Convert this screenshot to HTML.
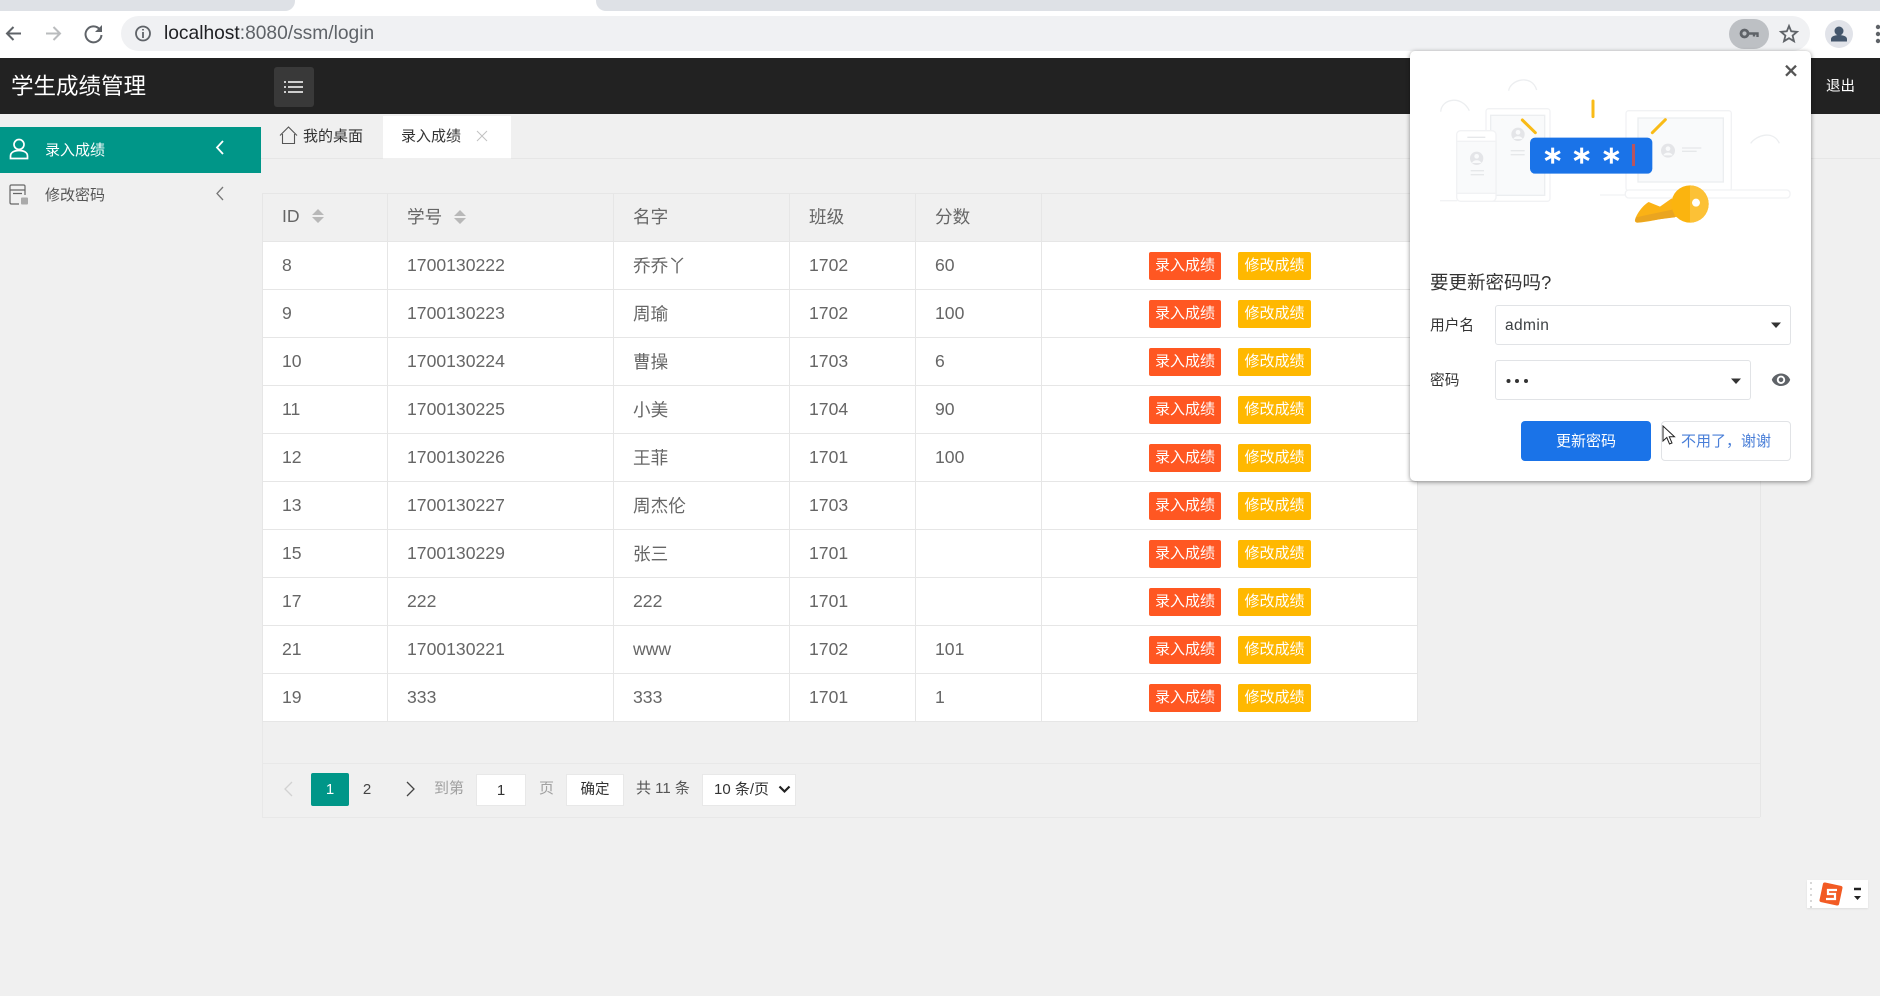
<!DOCTYPE html>
<html lang="zh"><head><meta charset="utf-8"><title>学生成绩管理</title>
<style>
*{box-sizing:border-box}
html,body{margin:0;padding:0}
body{width:1880px;height:996px;overflow:hidden;position:relative;background:#f0f0f0;font-family:"Liberation Sans","Noto Sans CJK SC",sans-serif;color:#666}
.a{position:absolute;white-space:nowrap}
table{position:absolute;left:262px;top:193px;width:1155px;border-collapse:collapse;table-layout:fixed;font-size:17.6px;color:#666}
th,td{height:48px;border:1px solid #e6e6e6;padding:0 0 0 19px;text-align:left;font-weight:400}
th{background:#f0f0f0;padding-bottom:2px}
td{background:#fff}
td.op{padding-left:107px;font-size:0}
.b{display:inline-block;height:28px;line-height:28px;width:72px;text-align:center;font-size:15px;color:#fff;background:#ff5722;border-radius:2px;vertical-align:middle}
.b.y{background:#ffb800;width:73px;margin-left:17px}
.s{display:inline-block;width:12px;height:14px;margin-left:12px;vertical-align:-1px}
.inp{background:#fff;border:1px solid #e1e3e6;border-radius:3px}
.pg{font-size:15px;line-height:20px}
</style></head><body>

<!-- browser chrome -->
<div class="a" style="left:0;top:0;width:1880px;height:58px;background:#fff"></div>
<div class="a" style="left:0;top:0;width:295px;height:11px;background:#dee1e6;border-radius:0 0 10px 0"></div>
<div class="a" style="left:596px;top:0;width:1284px;height:11px;background:#dee1e6;border-radius:0 0 0 10px"></div>
<div class="a" style="left:121px;top:16px;width:1689px;height:35px;background:#f0f1f3;border-radius:18px"></div>
<svg class="a" style="left:0;top:11px" width="160" height="46" viewBox="0 11 160 46" fill="none">
<path d="M21 33.5H7M13.5 27L7 33.5L13.5 40" stroke="#5f6368" stroke-width="2"/>
<path d="M46 33.500H60M53.500 27L60 33.500L53.500 40" stroke="#babcbe" stroke-width="2"/>
<path d="M99.500 29A8 8 0 1 0 101.500 35" stroke="#5f6368" stroke-width="2"/><path d="M102 25V32H95Z" fill="#5f6368"/>
<circle cx="143" cy="33.500" r="7" stroke="#5f6368" stroke-width="1.800"/><path d="M143 32V38M143 29V30.500" stroke="#5f6368" stroke-width="1.800"/>
</svg>
<div class="a" style="left:164px;top:22px;font-size:19.200px;line-height:24px;color:#202124">localhost<span style="color:#5f6368">:8080/ssm/login</span></div>
<div class="a" style="left:1729px;top:19px;width:40px;height:30px;background:#bdc0c4;border-radius:15px"></div>
<svg class="a" style="left:1720px;top:14px" width="160" height="40" viewBox="1720 14 160 40" fill="none">
<circle cx="1744.500" cy="33.500" r="3.500" stroke="#5f6368" stroke-width="2.800"/><path d="M1749 33.500H1757.500V37M1754 33.500V36.500" stroke="#5f6368" stroke-width="2.400"/>
<path d="M1789 26L1791.200 31.300L1797 31.800L1792.600 35.600L1794 41.200L1789 38.200L1784 41.200L1785.400 35.600L1781 31.800L1786.800 31.300Z" stroke="#5f6368" stroke-width="1.800"/>
<circle cx="1839" cy="34" r="14" fill="#e1e3e9"/><circle cx="1839" cy="31" r="4.500" fill="#44566c"/><path d="M1831 41.500V39C1831 36 1836 35 1839 35S1847 36 1847 39V41.500Z" fill="#44566c"/>
<circle cx="1878" cy="27" r="2.200" fill="#5f6368"/><circle cx="1878" cy="34" r="2.200" fill="#5f6368"/><circle cx="1878" cy="41" r="2.200" fill="#5f6368"/>
</svg>

<!-- app header -->
<div class="a" style="left:0;top:58px;width:1880px;height:56px;background:#222"></div>
<div class="a" style="left:11px;top:71px;font-size:22.500px;line-height:32px;color:#fff">学生成绩管理</div>
<div class="a" style="left:274px;top:67px;width:40px;height:40px;background:#393939;border-radius:3px"></div>
<svg class="a" style="left:284px;top:80px" width="20" height="14" fill="none" stroke="#fff" stroke-width="1.500"><path d="M0 2H2M4 2H19M0 7H2M4 7H19M0 12H2M4 12H19"/></svg>
<div class="a" style="left:1826px;top:77px;font-size:14.500px;line-height:20px;color:#fff">退出</div>

<!-- sidebar -->
<div class="a" style="left:0;top:127px;width:261px;height:46px;background:#009688"></div>
<svg class="a" style="left:9px;top:138px" width="20" height="22" fill="none" stroke="#fff" stroke-width="1.700"><circle cx="10" cy="6.500" r="5"/><path d="M1.500 20.500V18C1.500 14.500 5 12.500 10 12.500S18.500 14.500 18.500 18V20.500Z"/></svg>
<div class="a" style="left:45px;top:140px;font-size:15px;line-height:22px;color:#fff">录入成绩</div>
<svg class="a" style="left:215px;top:140px" width="10" height="15" fill="none" stroke="#fff" stroke-width="1.800"><path d="M8 1L2 7.500L8 14"/></svg>
<svg class="a" style="left:9px;top:184px" width="20" height="22" fill="none" stroke="#666" stroke-width="1.200"><path d="M16 11V2.500C16 1.500 15.500 1 14.500 1H2.500C1.500 1 1 1.500 1 2.500V18.500C1 19.500 1.500 20 2.500 20H10M1 6H16M4 9.500H13"/><rect x="12" y="13.500" width="7" height="7" rx="1" fill="#aaa" stroke="none"/></svg>
<div class="a" style="left:45px;top:185px;font-size:15px;line-height:22px;color:#555">修改密码</div>
<svg class="a" style="left:215px;top:186px" width="10" height="15" fill="none" stroke="#777" stroke-width="1.300"><path d="M8 1L2 7.500L8 14"/></svg>

<!-- tabs -->
<div class="a" style="left:261px;top:158px;width:1619px;height:1px;background:#e6e6e6"></div>
<svg class="a" style="left:279px;top:126px" width="19" height="19" fill="none" stroke="#555" stroke-width="1.100"><path d="M1 9.500L9.500 1L18 9.500M3.500 8V17.500H15.500V8"/></svg>
<div class="a" style="left:303px;top:126px;font-size:15px;line-height:22px;color:#333">我的桌面</div>
<div class="a" style="left:383px;top:116px;width:128px;height:43px;background:#fff;border-bottom:1px solid #f0f0f0"></div>
<div class="a" style="left:401px;top:126px;font-size:15px;line-height:22px;color:#333">录入成绩</div>
<svg class="a" style="left:476px;top:130px" width="12" height="12" stroke="#c2c2c2" stroke-width="1"><path d="M1 1L11 11M11 1L1 11"/></svg>

<!-- panel lines -->
<div class="a" style="left:262px;top:193px;width:1498px;height:1px;background:#e6e6e6"></div>
<div class="a" style="left:1760px;top:193px;width:1px;height:624px;background:#e6e6e6"></div>
<div class="a" style="left:262px;top:763px;width:1498px;height:1px;background:#e8e8e8"></div>
<div class="a" style="left:262px;top:817px;width:1498px;height:1px;background:#e8e8e8"></div>
<div class="a" style="left:262px;top:721px;width:1px;height:96px;background:#e8e8e8"></div>

<!-- table -->
<table>
<colgroup><col style="width:125px"><col style="width:226px"><col style="width:176px"><col style="width:126px"><col style="width:126px"><col style="width:376px"></colgroup>
<tr><th>ID<svg class="s" viewBox="0 0 12 14"><path d="M6 0L12 6H0ZM6 14L0 8H12Z" fill="#b8b8b8"/></svg></th><th>学号<svg class="s" viewBox="0 0 12 14"><path d="M6 0L12 6H0ZM6 14L0 8H12Z" fill="#b8b8b8"/></svg></th><th>名字</th><th>班级</th><th>分数</th><th></th></tr>
<tr><td>8</td><td>1700130222</td><td>乔乔丫</td><td>1702</td><td>60</td><td class="op"><span class="b">录入成绩</span><span class="b y">修改成绩</span></td></tr>
<tr><td>9</td><td>1700130223</td><td>周瑜</td><td>1702</td><td>100</td><td class="op"><span class="b">录入成绩</span><span class="b y">修改成绩</span></td></tr>
<tr><td>10</td><td>1700130224</td><td>曹操</td><td>1703</td><td>6</td><td class="op"><span class="b">录入成绩</span><span class="b y">修改成绩</span></td></tr>
<tr><td>11</td><td>1700130225</td><td>小美</td><td>1704</td><td>90</td><td class="op"><span class="b">录入成绩</span><span class="b y">修改成绩</span></td></tr>
<tr><td>12</td><td>1700130226</td><td>王菲</td><td>1701</td><td>100</td><td class="op"><span class="b">录入成绩</span><span class="b y">修改成绩</span></td></tr>
<tr><td>13</td><td>1700130227</td><td>周杰伦</td><td>1703</td><td></td><td class="op"><span class="b">录入成绩</span><span class="b y">修改成绩</span></td></tr>
<tr><td>15</td><td>1700130229</td><td>张三</td><td>1701</td><td></td><td class="op"><span class="b">录入成绩</span><span class="b y">修改成绩</span></td></tr>
<tr><td>17</td><td>222</td><td>222</td><td>1701</td><td></td><td class="op"><span class="b">录入成绩</span><span class="b y">修改成绩</span></td></tr>
<tr><td>21</td><td>1700130221</td><td>www</td><td>1702</td><td>101</td><td class="op"><span class="b">录入成绩</span><span class="b y">修改成绩</span></td></tr>
<tr><td>19</td><td>333</td><td>333</td><td>1701</td><td>1</td><td class="op"><span class="b">录入成绩</span><span class="b y">修改成绩</span></td></tr>
</table>

<!-- pagination -->
<svg class="a" style="left:282px;top:781px" width="12" height="16" fill="none" stroke="#d2d2d2" stroke-width="1.300"><path d="M10 1L3 8L10 15"/></svg>
<div class="a pg" style="left:311px;top:773px;width:38px;height:33px;line-height:33px;text-align:center;background:#009688;border-radius:2px;color:#fff">1</div>
<div class="a pg" style="left:347px;top:773px;width:40px;line-height:33px;text-align:center;color:#444">2</div>
<svg class="a" style="left:405px;top:781px" width="12" height="16" fill="none" stroke="#444" stroke-width="1.300"><path d="M2 1L9 8L2 15"/></svg>
<div class="a pg" style="left:434px;top:779px;color:#a0a0a0">到第</div>
<div class="a pg" style="left:476px;top:774px;width:50px;height:32px;line-height:31px;text-align:center;background:#fff;color:#333;border:1px solid #e8e8e8">1</div>
<div class="a pg" style="left:539px;top:779px;color:#a0a0a0">页</div>
<div class="a pg" style="left:566px;top:774px;width:58px;height:32px;line-height:30px;text-align:center;background:#fff;color:#333;border:1px solid #e8e8e8;font-size:14.500px">确定</div>
<div class="a pg" style="left:636px;top:779px;color:#555">共 11 条</div>
<div class="a pg" style="left:702px;top:774px;width:94px;height:32px;line-height:30px;padding-left:11px;background:#fff;color:#333;border:1px solid #e8e8e8">10 条/页</div>
<svg class="a" style="left:778px;top:785px" width="13" height="9" fill="none" stroke="#222" stroke-width="2.200"><path d="M1.500 1.500L6.500 6.500L11.500 1.500"/></svg>

<!-- password bubble -->
<div class="a" style="left:1410px;top:51px;width:401px;height:430px;background:#fff;border-radius:5px;box-shadow:0 1px 5px rgba(0,0,0,.45)"></div>
<svg class="a" style="left:1380px;top:0" width="500" height="260" viewBox="0 0 1500 780" fill="none">
<path d="M1218 197L1248 227M1248 197L1218 227" stroke="#555" stroke-width="7"/>
<g stroke="#f1f2f4" stroke-width="4">
<path d="M182 335C185 295 245 285 268 332M386 272C390 240 455 220 470 270M1112 430C1130 405 1180 390 1198 430" stroke="#eceef0"/>
<path d="M180 602H232M660 585H740"/>
<rect x="318" y="326" width="192" height="278" rx="8"/>
<rect x="332" y="346" width="162" height="240" fill="#f9fafb" stroke="#eceef0"/>
<rect x="230" y="392" width="118" height="212" rx="12" fill="#fff"/>
<rect x="230" y="424" width="118" height="156" fill="#f9fafb"/>
<path d="M262 412H316M272 512H312M272 524H312M392 452H434M392 464H434" stroke="#e6e8ea"/>
<rect x="738" y="332" width="316" height="240" rx="8"/>
<rect x="774" y="354" width="256" height="192" fill="#f9fafb" stroke="#eceef0"/>
<rect x="736" y="570" width="494" height="24" rx="10" fill="#fff"/>
<path d="M906 444H964M906 454H950" stroke="#e6e8ea"/>
</g>
<g fill="#e4e5e8"><circle cx="290" cy="475" r="20"/><circle cx="414" cy="403" r="20"/><circle cx="864" cy="452" r="21"/></g>
<g fill="#f9fafb"><circle cx="290" cy="469" r="7"/><path d="M276 489C280 478 300 478 304 489Z"/><circle cx="414" cy="397" r="7"/><path d="M400 417C404 406 424 406 428 417Z"/><circle cx="864" cy="446" r="7"/><path d="M850 466C854 455 874 455 878 466Z"/></g>
<path d="M427 360L466 398M639 303V350M856 359L817 398" stroke="#f9bb17" stroke-width="9" stroke-linecap="round"/>
<rect x="450" y="413" width="367" height="108" rx="15" fill="#1a73e8"/>
<g stroke="#fff" stroke-width="9"><path d="M518 443V491M496 455L540 479M540 455L496 479M605 443V491M583 455L627 479M627 455L583 479M694 443V491M672 455L716 479M716 455L672 479"/></g>
<rect x="756" y="432" width="9" height="66" fill="#b7545f"/>
<path d="M765 660C770 640 790 615 806 606L840 620L875 595L900 650C860 652 810 665 775 668C767 668 764 665 765 660Z" fill="#fbb215"/>
<path d="M768 652L880 628L885 652C850 655 800 664 772 668C766 668 764 660 768 652Z" fill="#eaa520"/>
<circle cx="930" cy="612" r="56" fill="#fbb40f"/>
<path d="M930 556A56 56 0 0 1 930 668Z" fill="#fcc136"/>
<circle cx="948" cy="608" r="12" fill="#fff"/>
</svg>
<div class="a" style="left:1430px;top:270px;font-size:18.500px;line-height:26px;color:#333">要更新密码吗?</div>
<div class="a" style="left:1430px;top:316px;font-size:14.700px;line-height:20px;color:#333">用户名</div>
<div class="a inp" style="left:1495px;top:305px;width:296px;height:40px"></div>
<div class="a" style="left:1505px;top:315px;font-size:15.500px;line-height:22px;color:#3c4043;letter-spacing:.4px">admin</div>
<div class="a" style="left:1430px;top:371px;font-size:14.700px;line-height:20px;color:#333">密码</div>
<div class="a inp" style="left:1495px;top:360px;width:256px;height:40px"></div>
<svg class="a" style="left:1500px;top:370px" width="300" height="22"><g fill="#333"><circle cx="8.500" cy="11" r="2"/><circle cx="17" cy="11" r="2"/><circle cx="26" cy="11" r="2"/></g><path d="M231 8.500H241L236 14Z" fill="#333"/></svg>
<svg class="a" style="left:1765px;top:319px" width="20" height="14"><path d="M6 3.500H16L11 9Z" fill="#333"/></svg>
<svg class="a" style="left:1771px;top:370px" width="20" height="20" viewBox="0 0 20 20"><path fill="#5f6368" d="M10 3.500C5.500 3.500 2 6.300.8 9.800 2 13.300 5.500 16 10 16s8-2.700 9.200-6.200C18 6.300 14.500 3.500 10 3.500zm0 10.500a4.200 4.200 0 1 1 0-8.400 4.200 4.200 0 0 1 0 8.400zm0-6.500a2.300 2.300 0 1 0 0 4.600 2.300 2.300 0 0 0 0-4.600z"/></svg>
<div class="a" style="left:1521px;top:421px;width:130px;height:40px;line-height:41px;text-align:center;background:#1a73e8;border-radius:4px;color:#fff;font-size:15px">更新密码</div>
<div class="a" style="left:1661px;top:421px;width:130px;height:40px;line-height:39px;padding-left:19px;background:#fff;border:1px solid #e1e3e6;border-radius:4px;color:#4a7fd8;font-size:15px">不用了，谢谢</div>
<svg class="a" style="left:1662px;top:425px" width="14" height="21"><path d="M1 1V16L4.800 12.500L7.500 19L10 18L7.300 11.800H12.500Z" fill="#fff" stroke="#222" stroke-width="1"/></svg>

<!-- sogou IME -->
<div class="a" style="left:1807px;top:880px;width:61px;height:28px;background:#fff;box-shadow:0 1px 2px rgba(0,0,0,.08)"></div>
<svg class="a" style="left:1808px;top:880px" width="60" height="30">
<g fill="#ccc"><circle cx="3" cy="3" r="1"/><circle cx="3" cy="9" r="1"/><circle cx="3" cy="15" r="1"/><circle cx="3" cy="21" r="1"/><circle cx="3" cy="27" r="1"/></g>
<rect x="13" y="4" width="20" height="20" rx="2" fill="#f25b24" transform="rotate(12 23 14)"/>
<path d="M29 10H20V14H27V19H18" fill="none" stroke="#fff" stroke-width="2.200"/>
<path d="M46 9H53" stroke="#222" stroke-width="2.500"/><path d="M46 16H53L49.500 20Z" fill="#222"/>
</svg>
</body></html>
